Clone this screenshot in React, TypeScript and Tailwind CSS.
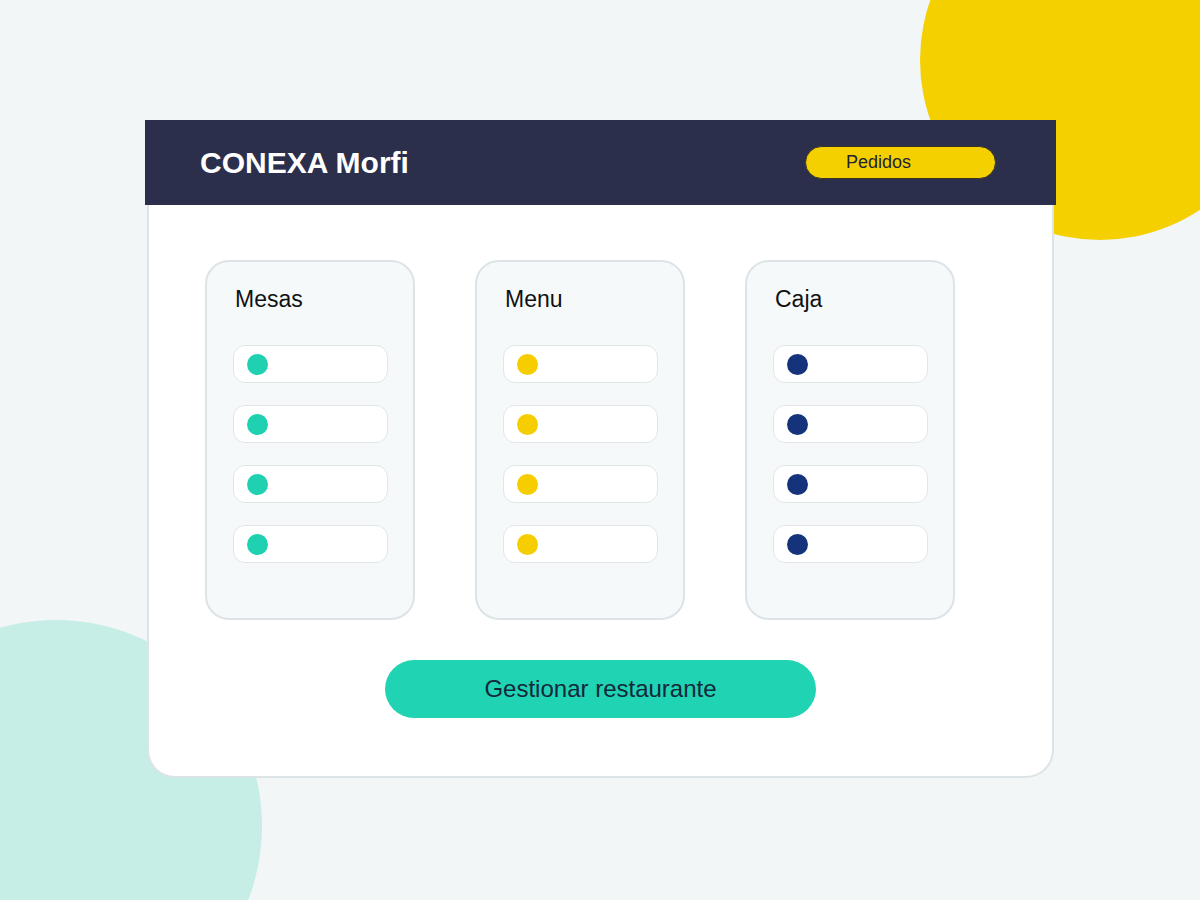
import React from "react";

const columns = [
  { title: "Mesas", dot: "bg-[#1fd1b1]" },
  { title: "Menu", dot: "bg-[#f5cd00]" },
  { title: "Caja", dot: "bg-[#15337a]" },
];

export default function App() {
  return (
    <div
      className="relative w-[1200px] h-[900px] overflow-hidden bg-[#f2f6f7]"
      style={{ fontFamily: '"Liberation Sans", Arial, sans-serif' }}
    >
      {/* decorative blobs */}
      <div className="absolute left-[920px] top-[-120px] w-[360px] h-[360px] rounded-full bg-[#f5d000]" />
      <div className="absolute left-[-150px] top-[620px] w-[412px] h-[412px] rounded-full bg-[#c6eee7]" />

      <div className="relative pt-[120px] pl-[145px]">
        <div className="w-[911px] flex flex-col">
          {/* header */}
          <header className="h-[85px] bg-[#2b2f4c] flex items-center justify-between pl-[55px] pr-[60px]">
            <h1 className="text-[30px] font-bold text-white">CONEXA Morfi</h1>
            <button className="w-[191px] h-[33px] rounded-full bg-[#f5d000] border border-[#3a3520] text-[18px] text-[#1f2330] text-left pl-[40px]">
              Pedidos
            </button>
          </header>

          {/* body */}
          <div className="mx-[2px] bg-white border-2 border-t-0 border-[#dde4e7] rounded-b-[28px] pt-[55px] pb-[58px] pl-[56px]">
            <div className="flex gap-[60px]">
              {columns.map((col) => (
                <div
                  key={col.title}
                  className="w-[210px] h-[360px] rounded-[24px] border-2 border-[#dde4e7] bg-[#f5f9fa] pl-[26px] pt-[24px]"
                >
                  <div className="pl-[2px] text-[23px] text-[#111] leading-[26px]">{col.title}</div>
                  <div className="mt-[33px] flex flex-col gap-[22px]">
                    {[0, 1, 2, 3].map((i) => (
                      <div
                        key={i}
                        className="w-[155px] h-[38px] rounded-[12px] border border-[#e1e6e9] bg-white flex items-center pl-[13px]"
                      >
                        <span className={`w-[21px] h-[21px] rounded-full ${col.dot}`} />
                      </div>
                    ))}
                  </div>
                </div>
              ))}
            </div>

            <div className="mt-[40px] pl-[180px]">
              <button className="w-[431px] h-[58px] rounded-full bg-[#1fd3b3] text-[24px] text-[#13283a]">
                Gestionar restaurante
              </button>
            </div>
          </div>
        </div>
      </div>
    </div>
  );
}
